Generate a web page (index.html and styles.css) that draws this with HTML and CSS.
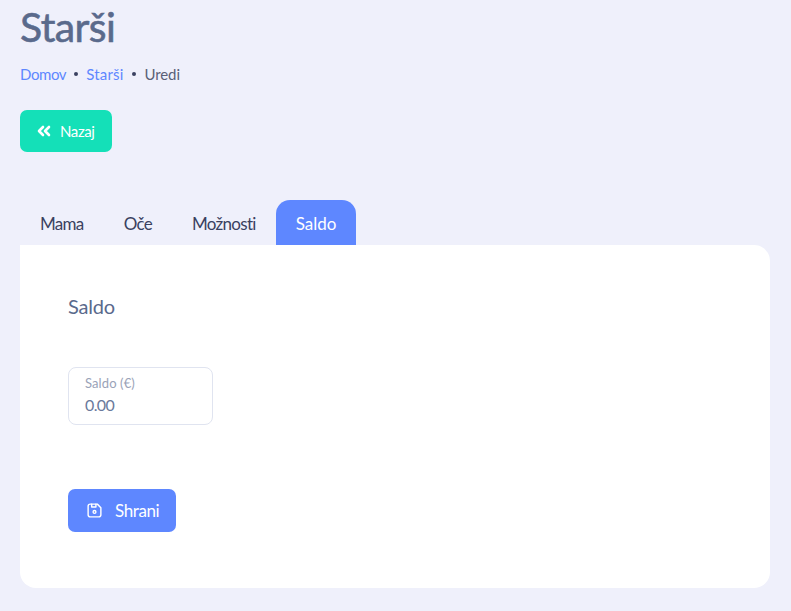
FILE: index.html
```html
<!DOCTYPE html>
<html lang="sl">
<head>
    <meta charset="UTF-8">
    <title>Starši</title>
    <link rel="stylesheet" href="styles.css">
</head>
<body>
    <h1 class="page-title">Starši</h1>
    <nav class="breadcrumb">
        <a href="#">Domov</a>
        <span class="dot"></span>
        <a href="#" class="crumb-wide">Starši</a>
        <span class="dot"></span>
        <span class="current">Uredi</span>
    </nav>
    <a href="#" class="btn btn-back">
        <svg width="14" height="12" viewBox="0 0 14 12" fill="none" stroke="#fff" stroke-width="2.6" stroke-linecap="round" stroke-linejoin="round">
            <path d="M6 2 2 6l4 4"/>
            <path d="M12 2 8 6l4 4"/>
        </svg>
        Nazaj
    </a>
    <ul class="tabs">
        <li class="tab">Mama</li>
        <li class="tab">Oče</li>
        <li class="tab">Možnosti</li>
        <li class="tab active">Saldo</li>
    </ul>
    <div class="card">
        <h2 class="card-title">Saldo</h2>
        <div class="field">
            <label class="field-label">Saldo (€)</label>
            <div class="field-value">0.00</div>
        </div>
        <a href="#" class="btn btn-save">
            <svg width="17" height="17" viewBox="0 0 24 24" fill="none" stroke="#fff" stroke-width="2" stroke-linecap="round" stroke-linejoin="round">
                <path d="M6 3h10l5 5v10a3 3 0 0 1-3 3H6a3 3 0 0 1-3-3V6a3 3 0 0 1 3-3z"/>
                <circle cx="12" cy="14" r="2"/>
                <path d="M14 3v4H8V3"/>
            </svg>
            Shrani
        </a>
    </div>
</body>
</html>
```

FILE: styles.css
```css
body {
    margin: 0;
    padding: 0 21px 23px 20px;
    background-color: #eff0fb;
    font-family: "Lato", "Noto Sans", sans-serif;
    color: #3a4160;
}

.page-title {
    margin: 0;
    padding-top: 4px;
    font-size: 41px;
    line-height: 46px;
    font-weight: 400;
    letter-spacing: -0.6px;
    color: #5a6a8c;
    -webkit-text-stroke: 0.6px #5a6a8c;
}

.breadcrumb {
    display: flex;
    align-items: center;
    gap: 8px;
    margin-top: 14px;
    font-size: 15px;
    line-height: 20px;
}

.breadcrumb a {
    color: #5e87ff;
    text-decoration: none;
    letter-spacing: -0.4px;
}

.breadcrumb .crumb-wide {
    letter-spacing: 0.2px;
}

.breadcrumb .current {
    margin-left: 1px;
    letter-spacing: -0.1px;
    color: #5a6077;
}

.dot {
    width: 4px;
    height: 4px;
    border-radius: 50%;
    background-color: #3a4160;
}

.btn {
    display: inline-flex;
    align-items: center;
    color: #fff;
    text-decoration: none;
    border-radius: 7px;
}

.btn-back {
    gap: 9px;
    margin-top: 26px;
    padding: 0 17px;
    height: 42px;
    font-size: 15px;
    letter-spacing: -0.4px;
    background-color: #14e0b8;
}

.tabs {
    display: flex;
    margin: 48px 0 0;
    padding: 0;
    list-style: none;
}

.tab {
    padding: 0 20px;
    height: 45px;
    line-height: 47px;
    font-size: 17px;
    letter-spacing: -0.7px;
    color: #3a4160;
    border-radius: 14px 14px 0 0;
}

.tab.active {
    letter-spacing: 0;
    background-color: #5e87ff;
    color: #fff;
}

.card {
    padding: 48px;
    height: 247px;
    background-color: #fff;
    border-radius: 0 16px 16px 16px;
}

.card-title {
    margin: 0;
    font-size: 20px;
    line-height: 26px;
    font-weight: 400;
    letter-spacing: -0.2px;
    color: #5a6a8c;
}

.field {
    box-sizing: border-box;
    width: 145px;
    height: 58px;
    margin-top: 48px;
    padding: 7px 16px;
    border: 1px solid #e0e4f0;
    border-radius: 8px;
}

.field-label {
    display: block;
    font-size: 13px;
    line-height: 17px;
    letter-spacing: 0.1px;
    color: #9aa3b8;
}

.field-value {
    margin-top: 1px;
    font-size: 16px;
    line-height: 24px;
    letter-spacing: -0.6px;
    color: #6a7a9c;
}

.btn-save {
    gap: 12px;
    margin-top: 64px;
    padding: 0 17px 0 18px;
    height: 43px;
    font-size: 17px;
    letter-spacing: -0.4px;
    background-color: #5e87ff;
}
```
